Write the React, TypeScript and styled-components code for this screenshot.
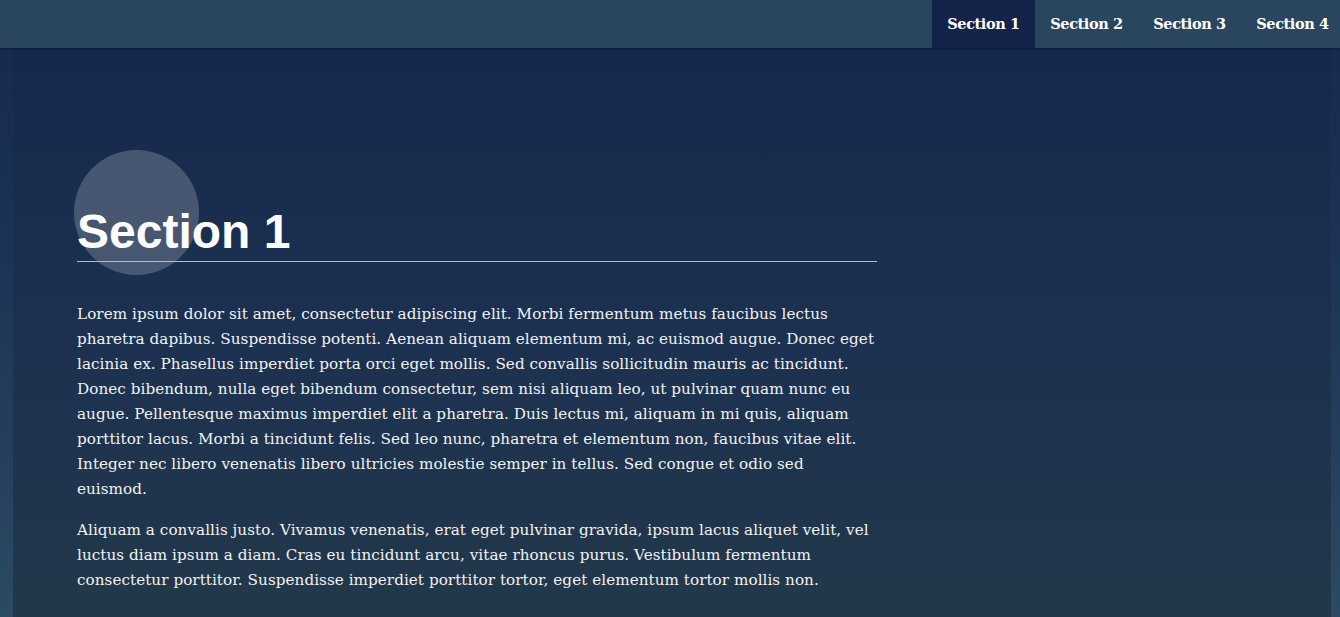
import React from "react";
import styled, { createGlobalStyle } from "styled-components";

const Global = createGlobalStyle`
  html, body { margin: 0; padding: 0; }
  body {
    min-height: 617px;
    background: linear-gradient(180deg, #15284c 0%, #1d3556 45%, #2c4a64 100%);
    font-family: "DejaVu Serif", "Liberation Serif", serif;
    color: #f3f3f3;
  }
`;

const Page = styled.div`
  display: flex;
  flex-direction: column;
  height: 617px;
  overflow: hidden;
`;

const Header = styled.header`
  height: 48px;
  flex: none;
  display: flex;
  justify-content: flex-end;
  background: #2a465f;
  box-shadow: 0 1px 2px rgba(10, 20, 45, 0.7);
  position: relative;
  z-index: 2;
`;

const Nav = styled.nav`
  display: flex;
  margin-right: -4px;
`;

const NavItem = styled.a<{ $active?: boolean }>`
  display: flex;
  align-items: center;
  justify-content: center;
  width: 103px;
  padding-bottom: 2px;
  box-sizing: border-box;
  font-family: "DejaVu Serif", serif;
  font-weight: 700;
  font-size: 14.5px;
  letter-spacing: -0.4px;
  color: #ffffff;
  text-decoration: none;
  background: ${(p) => (p.$active ? "#13234a" : "transparent")};
  white-space: nowrap;
`;

const Main = styled.main`
  flex: 1;
  margin: 0 9px 0 13px;
  padding: 156px 64px 0 64px;
  background: linear-gradient(180deg, #16284c 0%, #1c3150 50%, #22384a 100%);
`;

const Content = styled.section`
  width: 800px;
  position: relative;
`;

const Bubble = styled.div`
  position: absolute;
  left: -3px;
  top: -54px;
  width: 125px;
  height: 125px;
  border-radius: 50%;
  background: rgba(255, 255, 255, 0.2);
`;

const Title = styled.h1`
  position: relative;
  margin: 0;
  font-family: "Liberation Sans", Arial, sans-serif;
  font-weight: 700;
  font-size: 48px;
  line-height: 56px;
  color: #ffffff;
  padding-bottom: 1px;
  border-bottom: 1px solid #c6cf2e;
`;

const Body = styled.div`
  margin-top: 40px;
`;

const Para = styled.p`
  margin: 0 0 16px 0;
  font-size: 15.2px;
  line-height: 25px;
  letter-spacing: 0.05px;
  color: #f2f2f2;
`;

export default function App() {
  return (
    <>
      <Global />
      <Page>
        <Header>
          <Nav>
            <NavItem $active href="#">Section 1</NavItem>
            <NavItem href="#">Section 2</NavItem>
            <NavItem href="#">Section 3</NavItem>
            <NavItem href="#">Section 4</NavItem>
          </Nav>
        </Header>
        <Main>
          <Content>
            <Bubble />
            <Title>Section 1</Title>
            <Body>
              <Para>
                Lorem ipsum dolor sit amet, consectetur adipiscing elit. Morbi fermentum metus faucibus lectus
                pharetra dapibus. Suspendisse potenti. Aenean aliquam elementum mi, ac euismod augue. Donec eget
                lacinia ex. Phasellus imperdiet porta orci eget mollis. Sed convallis sollicitudin mauris ac tincidunt.
                Donec bibendum, nulla eget bibendum consectetur, sem nisi aliquam leo, ut pulvinar quam nunc eu
                augue. Pellentesque maximus imperdiet elit a pharetra. Duis lectus mi, aliquam in mi quis, aliquam
                porttitor lacus. Morbi a tincidunt felis. Sed leo nunc, pharetra et elementum non, faucibus vitae elit.
                Integer nec libero venenatis libero ultricies molestie semper in tellus. Sed congue et odio sed
                euismod.
              </Para>
              <Para>
                Aliquam a convallis justo. Vivamus venenatis, erat eget pulvinar gravida, ipsum lacus aliquet velit, vel
                luctus diam ipsum a diam. Cras eu tincidunt arcu, vitae rhoncus purus. Vestibulum fermentum
                consectetur porttitor. Suspendisse imperdiet porttitor tortor, eget elementum tortor mollis non.
              </Para>
            </Body>
          </Content>
        </Main>
      </Page>
    </>
  );
}
